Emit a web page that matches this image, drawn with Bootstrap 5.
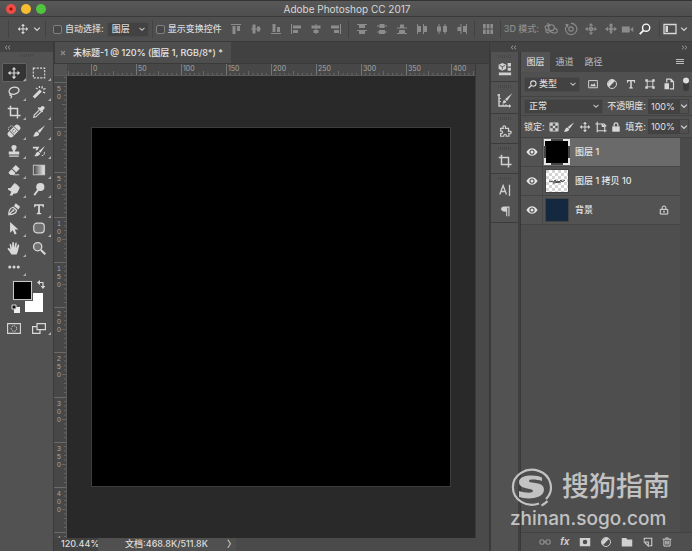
<!DOCTYPE html>
<html lang="zh-CN">
<head>
<meta charset="utf-8">
<meta name="viewport" content="width=device-width, initial-scale=1">
<title>Adobe Photoshop CC 2017</title>
<link href="https://cdn.jsdelivr.net/npm/bootstrap@5.3.0/dist/css/bootstrap.min.css" rel="stylesheet">
<style>
:root{--panel:#525252;--bar:#4f4f4f;--dark:#434343;--line:#3a3a3a;--ink:#d8d8d8}
body{font-family:Inter,"Noto Sans CJK SC",sans-serif;font-size:9px;line-height:12px;color:var(--ink);background:var(--panel)}
button{background:none;border:0;padding:0;color:inherit;line-height:12px}
svg{display:block;fill:currentColor}
.ln{fill:none;stroke:currentColor}
.i10{width:10px;height:10px}.i12{width:12px;height:12px}.i14{width:14px;height:14px}.i16{width:16px;height:16px}
.fit{min-width:0;min-height:0}
.titlebar{height:17px;background:linear-gradient(#585858,#4e4e4e);border-bottom:1px solid var(--line);font-size:10px;border-top:1px solid #333;padding-left:2px}
.lights{left:6px;top:3px;gap:5px}
.light{width:10px;height:10px;border-radius:50%}
.l-red{background:radial-gradient(circle,#8c0f0c 0 1px,#ee4d45 2px)}
.l-yel{background:#f6bd30}.l-grn{background:#50c43e}
.options{height:25px;background:var(--bar);border-bottom:1px solid var(--line);white-space:nowrap;overflow:hidden;font-weight:500}
.options>*,.options .cellrow>*{flex-shrink:0}
.sep{width:1px;height:18px;background:#434343}
.gsep{margin:0 3px 0 2px}
.cell{width:20px;height:18px;display:flex;align-items:center;justify-content:center}
.off{color:#8c8c8c}
.tick{appearance:none;width:9px;height:9px;margin:0 3px;border:1px solid #808080;border-radius:2px;background:#474747}
.tick:checked{background:#bbb}
.pick{appearance:none;border:1px solid #4b4b4b;border-radius:1px;background-color:#424242;color:var(--ink);font-size:9px;line-height:12px;font-weight:500;padding:0 12px 0 4px;height:15px;
background-image:url("data:image/svg+xml,%3Csvg xmlns='http://www.w3.org/2000/svg' viewBox='0 0 8 8'%3E%3Cpath d='M1.5 2.8 4 5.2 6.5 2.8' fill='none' stroke='%23bbb' stroke-width='1.1'/%3E%3C/svg%3E");background-repeat:no-repeat;background-position:right 2px center;background-size:8px}
.pick.auto{width:42px;margin:0 3px}
.pick.kind{width:56px;padding-left:14px}
.kindico{left:4px;top:3px;width:9px;height:9px;z-index:1}
.strip{height:10px;background:var(--dark);color:#a5a5a5;padding:0 4px}
.strip svg{width:7px;height:5px}
.toolcol{width:54px;background:var(--panel);border-right:1px solid var(--line)}
.grip{width:13px;height:3px;margin:2px auto 6px;background:repeating-linear-gradient(90deg,#484848 0 1px,transparent 1px 2px)}
.toolgrid{display:grid;grid-template-columns:25px 25px;grid-auto-rows:1fr;height:214px;margin:0 3px 0 2px;color:#d8d8d8}
.toolgrid button,.modes button{display:flex;align-items:center;justify-content:center;position:relative;border-radius:1px}
.toolgrid button{padding-right:2px}
.more::after{content:"";position:absolute;right:1px;bottom:1px;border:solid transparent;border-width:0 0 3px 3px;border-bottom-color:#adadad}
.toolgrid .picked{background:#343434;outline:1px solid #626262;outline-offset:-1px}
.swatches{height:36px;margin-top:2px}
.swatches button{position:absolute}
.swatches .bg-sw{left:25px;top:14px;width:18px;height:19px;background:#fff}
.swatches .fg-sw{left:13px;top:2px;width:19px;height:19px;background:#000;border:1px solid #c8c8c8;outline:1px solid #555}
.swap{left:37px;top:1px}.deft{left:11px;top:25px}
.modes{margin:5px 2px 0;display:grid;grid-template-columns:25px 25px}
.modes button{height:16px;padding-right:2px}
.doc{border-right:1px solid var(--line)}
.doctabs{height:22px;background:#414141;border-bottom:1px solid var(--line)}
.doctab{background:#4e4e4e;border-left:1px solid #3a3a3a;padding:0 8px 0 5px;gap:7px;color:#e6e6e6;font-weight:500;white-space:nowrap}
.rulerrow{height:12px;background:#474747;border-bottom:1px solid #5a5a5a}
.corner{width:13px;background:#525252}
.ruler{color:#a6a6a6;font-size:7px;line-height:9px}
.rh{padding-left:24px;overflow:hidden;position:relative}
.rh span{width:45px;flex-shrink:0;padding-left:1px;border-left:1px solid #757575}
.tks{position:absolute;inset:0;width:100%;height:100%}
.tpat{stroke:#666;fill:none}
.rv{width:13px;background:#474747;border-right:1px solid #5a5a5a;position:relative;overflow:hidden;padding-top:6px;font-family:"Liberation Sans",sans-serif}
.rv span{display:block;height:45px;flex-shrink:0;padding:2px 0 0 3px;line-height:8px;border-top:1px solid #6a6a6a;width:12px}
.desk{background:#292929;padding:51px 24px}
.board{background:#000;border:1px solid #3d3d3d}
.scroller{width:14px;background:#4a4a4a;border-left:1px solid #3a3a3a}
.status{height:13px;background:#4a4a4a;color:#dcdcdc;font-weight:500}
.zoomval{width:44px;padding-left:7px;background:#434343}
.docinfo{width:138px;background:#505050;padding:0 0 0 27px}
.dock{width:202px;background:#404040}
.iconcol{width:28px;background:var(--panel);border-left:1px solid var(--line);color:#d0d0d0}
.iconcol .grp{border-bottom:1px solid #3b3b3b;padding-bottom:5px}
.iconcol .grip{width:14px;margin:3px auto 4px}
.iconcol button{display:block;margin:0 auto}
.iconcol .gap-below{margin-bottom:9px}
.panel{background:#4e4e4e;border-left:1px solid #393939;margin-left:2px}
.ptabs{height:20px;background:#424242;color:#bcbcbc;font-weight:500}
.ptabs button{width:29px}
.ptabs .on{background:#535353;color:#ececec}
.ptabs .pmenu{width:16px}
.prow{padding:0 3px;white-space:nowrap;font-weight:500;border-bottom:1px solid #434343;background:#505050}
.r1{height:25px}.r2{height:19px}.r3{height:22px}
.num{width:31px;height:15px;margin-left:2px;background:#434343;border:1px solid #414141;color:#e0e0e0;font-size:9px;padding:0 2px;border-radius:0}
.drop{width:10px;height:15px;border:1px solid #424242;display:flex;align-items:center;justify-content:center}
.drop svg,.chev{width:8px;height:8px}
.layers{border-right:12px solid #4a4a4a}
.layer{height:29px;border-bottom:1px solid #454545;background:#535353;font-weight:500;color:#e6e6e6}
.layer.on{background:#6a6a6a}
.eye{width:22px;height:28px;display:flex;align-items:center;justify-content:center;border-right:1px solid #484848;background:#535353}
.thumb{width:24px;height:24px;margin:0 6px 0 2px;border:1px solid #444}
.t1{background:#000;width:26px;height:26px;margin:0 5px 0 1px;border:0}
.t2{background:repeating-conic-gradient(#fff 0 25%,#d4d4d4 0 50%) 0 0/6px 6px;color:#444}
.t3{background:#14293f}
.lockmark{margin:0 11px 0 auto}
.pfoot{height:19px;background:#4f4f4f;border-top:1px solid #424242;padding:0 20px 0 18px;color:#d0d0d0}
.fxi{font:italic 700 10px/12px "Liberation Sans",sans-serif}
.wm{right:22px;bottom:22px;color:#c2c2c2;line-height:1}
.wm .logo{width:44px;height:42px}
.wm-a{font-size:27px;line-height:34px;padding-bottom:6px;font-family:"Noto Sans CJK SC",sans-serif;font-weight:500}
.wm-b{font:500 19px/20px Inter,sans-serif}
</style>
<script src="https://cdn.jsdelivr.net/npm/bootstrap@5.3.0/dist/js/bootstrap.bundle.min.js"></script>
</head>
<body class="vh-100 d-flex flex-column overflow-hidden">
<svg width="0" height="0" class="position-absolute" aria-hidden="true">
<defs>
<symbol id="move" viewBox="0 0 16 16"><path d="M8 1 10.600 4H8.700v3.300H12V5.400L15 8l-3 2.600V8.700H8.700V12h1.900L8 15l-2.600-3h1.900V8.700H4v1.900L1 8l3-2.600v1.900h3.300V4H5.400z"/></symbol>
<symbol id="marq" viewBox="0 0 16 16"><rect x="1.500" y="2.500" width="13" height="11" class="ln" stroke-width="1.300" stroke-dasharray="2.400 1.400"/></symbol>
<symbol id="lasso" viewBox="0 0 16 16"><path class="ln" stroke-width="1.400" d="M4.500 10.500C0 7.500 3.500 2.500 8.800 2.500S15.500 7.200 11 9.600C8.500 10.800 6 10.800 4.500 10.200c-1.700.3-1.500 2.300.2 2 1.300.6.600 2-.7 2.800"/></symbol>
<symbol id="wand" viewBox="0 0 16 16"><path d="m.8 13 8-8 2.500 2.500-8 8z"/><path class="ln" stroke-width="1.400" d="M8.500 1v2.500M12 1.500 11 4M15.500 4l-2.700 1M15 9l-2.500-.8M4.500 3.500l2 1"/></symbol>
<symbol id="crop" viewBox="0 0 16 16"><path class="ln" stroke-width="1.700" d="M4 .8V12h11.500M.8 4H12v11.500"/></symbol>
<symbol id="drop" viewBox="0 0 16 16"><path d="M10 2.500c1-1.500 2.500-2 3.700-.8s.8 2.800-.7 3.800l-1 1 .8.900-1.300 1.300-5-5 1.300-1.300.9.800z"/><path class="ln" stroke-width="1.300" d="m8.500 5.500-6 6L2 14l2.500-.5 6-6"/></symbol>
<symbol id="heal" viewBox="0 0 16 16"><g transform="rotate(-45 8 8)"><rect x="-.5" y="4.300" width="17" height="7.400" rx="3.300"/><path stroke="#525252" d="M4.500 4.500v7M11.500 4.500v7"/><path fill="#525252" d="M6 6h1.200v1.200H6zm2.500 0h1.200v1.200H8.500zM6 8.700h1.200v1.200H6zm2.500 0h1.200v1.200H8.500z"/></g><path class="ln" stroke-dasharray="1.500 1" d="M2 7C1 3.500 3.500 1.500 7 2.500"/></symbol>
<symbol id="brush" viewBox="0 0 16 16"><path d="M15 1.500 8.800 10.200 6.400 8zM5.700 8.600l2.500 2.200C8.300 13.500 5 15 1 14c2-.8 1.600-4.800 4.700-5.400z"/></symbol>
<symbol id="stamp" viewBox="0 0 16 16"><path d="M6.800 8.500C7 6.500 5 6 5 4a3 3 0 0 1 6 0c0 2-2 2.500-1.800 4.500H14V12H2V8.500zM2.500 13h11v1.500h-11z"/></symbol>
<symbol id="hist" viewBox="0 0 16 16"><path d="M15 2 9.800 10 7.600 8.200zM7 8.800 9.200 10.600c0 2.600-3.400 4-6.700 3 2-.8 1.500-4.200 4.500-4.800zM1 3h7.500L6 7H4l1.200-2H1z"/><path class="ln" d="M11 13.500c3-.5 3.500-2.500 3-4.500"/></symbol>
<symbol id="erase" viewBox="0 0 16 16"><path d="m6 6.200 4-4 4.500 4.500-4 4zM5.300 7l4.500 4.400-2.300 2.200H4L1.800 11.500v-1z"/><path class="ln" d="M7 13.500h7"/></symbol>
<linearGradient id="gg"><stop stop-color="#444"/><stop offset="1" stop-color="#eee"/></linearGradient>
<symbol id="grad" viewBox="0 0 16 16"><rect x="1.500" y="2.500" width="13" height="11" fill="url(#gg)" stroke="#ccc"/></symbol>
<symbol id="smudge" viewBox="0 0 16 16"><path d="M3 15.500 5 11 1 8.500C1 7 2.500 6.500 3.700 7.200L8 2c1-1 2.200-.2 2 .8.900-.5 2 0 1.800 1.200 1-.3 1.800.5 1.500 1.500.9 0 1.400.6 1 1.700L12 12c-1.500 1.400-3.500 1.200-5 1.500L6.500 15.500z"/></symbol>
<symbol id="dodge" viewBox="0 0 16 16"><circle cx="9.500" cy="5.700" r="4.700"/><path class="ln" stroke-width="2" d="m7 9-4.500 6"/></symbol>
<symbol id="pen" viewBox="0 0 16 16"><path class="ln" stroke-width="1.400" d="M2 14.500c0-4 .8-7.500 5-8.500l4 3.500c-.7 4-4.500 4.800-9 5zm0 0 4.500-4.500"/><circle cx="7.300" cy="9.500" r="1.300"/><path d="m8 4.500 2-3 5 4-2 3z"/></symbol>
<symbol id="type" viewBox="0 0 16 16"><path d="M1.500 1.500h13v4.300H13c-.1-1.600-.6-2.200-2.200-2.200H9.200v8.700c0 1 .4 1.200 1.800 1.200V15H5v-1.500c1.400 0 1.800-.2 1.800-1.200V3.600H5.200C3.600 3.600 3.100 4.200 3 5.800H1.500z"/></symbol>
<symbol id="arrow" viewBox="0 0 16 16"><path d="M3.500 1v12.500l3.100-3 2.100 5 2.300-1-2.100-4.700H13z"/></symbol>
<symbol id="rrect" viewBox="0 0 16 16"><rect x="2" y="2.500" width="12" height="11" rx="3.500" fill="#707070" stroke="currentColor" stroke-width="1.300"/></symbol>
<symbol id="hand" viewBox="0 0 16 16"><path d="M5 15.500C3.800 13 2 11 .8 9.500.5 8 2 7.700 3 8.700l1 1.100L3 4.200c0-1.200 1.400-1.300 1.700-.2l1 4L6 2c.2-1.300 1.700-1.300 1.900 0l.2 5.700L9.500 2.400c.4-1.200 1.800-.8 1.700.4l-.8 5.600 2-4c.6-1 1.800-.4 1.500.6-.8 3-1.200 7.500-3 10.500z"/></symbol>
<symbol id="loupe" viewBox="0 0 16 16"><circle cx="6.500" cy="6.500" r="4.700" fill="#727272" stroke="currentColor" stroke-width="1.500"/><path class="ln" stroke-width="2.300" d="m10.200 10.200 5 5"/></symbol>
<symbol id="dots" viewBox="0 0 16 16"><circle cx="2.300" cy="8" r="2"/><circle cx="8" cy="8" r="2"/><circle cx="13.700" cy="8" r="2"/></symbol>
<symbol id="find" viewBox="0 0 16 16"><circle class="ln" stroke-width="1.900" cx="9.500" cy="6.300" r="4.800"/><path class="ln" stroke-width="2.300" d="m6 9.800-5 5"/></symbol>
<symbol id="chev" viewBox="0 0 8 8"><path class="ln" stroke-width="1.200" d="M1.200 2.600 4 5.400l2.800-2.800"/></symbol>
<symbol id="dbl" viewBox="0 0 8 6"><path class="ln" stroke-width="1.100" d="M3.500.8 1.200 3l2.300 2.200M7 .8 4.700 3 7 5.200"/></symbol>
<symbol id="al-t" viewBox="0 0 12 12"><path d="M1 1h10v1H1zM2.500 3h3v8h-3zm4.500 0h3v5H7z"/></symbol>
<symbol id="al-m" viewBox="0 0 12 12"><path d="M1 5.500h10v1H1zM2.500 1.500h3v9h-3zm4.500 2h3v5H7z"/></symbol>
<symbol id="al-b" viewBox="0 0 12 12"><path d="M1 10h10v1H1zM2.500 1h3v8h-3zM7 4h3v5H7z"/></symbol>
<symbol id="ds-t" viewBox="0 0 12 12"><path d="M1 1h10v1H1zm2 1h6v3H3zM1 7h10v1H1zm2 1h6v3H3z"/></symbol>
<symbol id="ds-m" viewBox="0 0 12 12"><path d="M1 2.500h10v1H1zM3.500 1h5v4h-5zM1 8.500h10v1H1zM3 7h6v4H3z"/></symbol>
<symbol id="ds-b" viewBox="0 0 12 12"><path d="M1 4.500h10v1H1zm3-3h4v3H4zM1 10h10v1H1zm2-3h6v3H3z"/></symbol>
<symbol id="dist" viewBox="0 0 12 12"><path d="M1 1h2.700v4.600H1zm3.700 0h2.700v4.600H4.700zm3.700 0H11v4.600H8.400zM1 6.500h2.700V11H1zm3.700 0h2.700V11H4.700zm3.700 0H11V11H8.400z"/></symbol>
<symbol id="orbit" viewBox="0 0 16 16"><g class="ln" stroke-width="1.300"><path d="M5 3.500C1 3.500 0 6.500 3 8.500s7 4.500 10 4c3-.6 3-4-.5-5.500M6 12.500c-3 0-4.500-1.500-3.500-4"/><circle cx="8.500" cy="6.500" r="3.300"/><path d="m4 1.500 2.500 2L4 5.500"/></g></symbol>
<symbol id="roll" viewBox="0 0 16 16"><g class="ln" stroke-width="1.300"><circle cx="8" cy="8" r="2.500"/><path d="M4 3a6.500 6.500 0 1 0 4-1.500M1.500 2.500 4.500 3 4 6"/></g></symbol>
<symbol id="pan" viewBox="0 0 16 16"><path d="m8 0 3 3.500H5zM0 8l3.500-3v6zm16 0-3.500-3v6zM8 16l3-3.500H5z"/><path class="ln" stroke-width="1.300" d="M8 3v10M3 8h10M6 6h4v4H6z"/></symbol>
<symbol id="slide" viewBox="0 0 16 16"><path d="M6 1h4v4H6zM0 8l4-3v6zm16 0-4-3v6zM5.500 11h5L8 15z"/><circle cx="8" cy="8" r="2.600"/><path d="M3 7.300h10v1.400H3zM7.300 4h1.400v8H7.300z"/></symbol>
<symbol id="cam" viewBox="0 0 16 16"><path d="M1 5h9v7H1zm9.500 3.500L14 5.500v6z"/></symbol>
<symbol id="eye" viewBox="0 0 16 16"><path fill-rule="evenodd" d="M.5 8C3 4.200 5.500 3 8 3s5 1.200 7.500 5C13 11.800 10.500 13 8 13S3 11.800.5 8zM8 4.500a3.500 3.500 0 1 0 0 7 3.500 3.500 0 0 0 0-7z"/><circle cx="8" cy="8" r="2"/></symbol>
<symbol id="lock" viewBox="0 0 16 16"><path d="M2 7h12v8.500H2z"/><path class="ln" stroke-width="2" d="M5 7V4.500a3 3 0 0 1 6 0V7"/></symbol>
<symbol id="locko" viewBox="0 0 16 16"><path class="ln" stroke-width="1.500" d="M2 7h12v7.500H2zM5 7V4.500a3 3 0 0 1 6 0V7"/><path d="M7 9h2v3H7z"/></symbol>
<symbol id="half" viewBox="0 0 16 16"><circle class="ln" stroke-width="1.300" cx="8" cy="8" r="6"/><path d="M12.200 3.800A6 6 0 0 0 3.800 12.200z"/></symbol>
<symbol id="pic" viewBox="0 0 16 16"><path class="ln" stroke-width="1.500" d="M1 2.500h14v11.500H1z"/><path d="m3.500 11.500 2.500-4 2 2 2-3 2.500 5z"/></symbol>
<symbol id="xform" viewBox="0 0 16 16"><path class="ln" stroke-width="1.500" d="M3.500 3.500h9v9h-9z"/><path d="M.5.500h4v4h-4zm11 0h4v4h-4zM.5 11.500h4v4h-4zm11 0h4v4h-4z"/></symbol>
<symbol id="smart" viewBox="0 0 16 16"><path class="ln" stroke-width="1.500" d="M5 6V1.500h5.500L14 5v9.500H9"/><path d="M2 7h6v8H2zm8-6v4.500h4.500z"/></symbol>
<symbol id="checker" viewBox="0 0 16 16"><path class="ln" stroke-width="1.400" d="M1.500 1.500h13v13h-13z"/><path d="M2 2h4v4H2zm8 0h4v4h-4zM6 6h4v4H6zm-4 4h4v4H2zm8 0h4v4h-4z"/></symbol>
<symbol id="art" viewBox="0 0 16 16"><path class="ln" stroke-width="1.500" d="M3 1v14M.5 4H12l3 3M13 6v9M3 13h12.500"/><path d="M9 3v5h5z"/></symbol>
<symbol id="props" viewBox="0 0 16 16"><path d="m5 1 4.300 2v4.800L5 10 .7 7.800V3z"/><path fill="none" stroke="#525252" d="m2 4 3 1.400L8 4M5 5.400v3"/><path d="M11 1h3.800v4H11zm0 5.500h3.800V10H11zM1 12h14v3H1z"/></symbol>
<symbol id="bset" viewBox="0 0 16 16"><path class="ln" stroke-width="1.400" d="M2 2v12h12M.5 3H3"/><path class="ln" d="M2 6.500h1.800M2 9.500h1.800M6 14v-1.800M9 14v-1.800M12.500 15.500v-3"/><path d="M15.500 1 10 9 8 7.300zM7.300 8l2 1.600c-.5 1.900-2.600 2.200-4 1.700 1-.5.600-3 2-3.300z"/></symbol>
<symbol id="plug" viewBox="0 0 16 16"><path class="ln" stroke-width="1.400" d="M3 5h3C4.500 1 9.500 1 8.500 5H12v3.500c4-1.500 4 3.500.5 2.500V14h-3c.5-3-3-3-3 0H3v-3c3 .5 3-3.500 0-3z"/></symbol>
<symbol id="chara" viewBox="0 0 16 16"><path class="ln" stroke-width="1.700" d="m1 14 4.500-12L10 14M2.500 10h6M14 1v15"/></symbol>
<symbol id="para" viewBox="0 0 16 16"><path d="M14 2v13h-1.500V3.500H11V15H9.500V9C1 9.500 1 2 7 2z"/></symbol>
<symbol id="mask" viewBox="0 0 16 16"><path fill-rule="evenodd" d="M1 2.500h14v11H1zM8 5a3 3 0 1 0 0 6 3 3 0 0 0 0-6z"/></symbol>
<symbol id="folder" viewBox="0 0 16 16"><path d="M1 2.500h6l1.500 2H15V14H1z"/></symbol>
<symbol id="newl" viewBox="0 0 16 16"><path class="ln" stroke-width="1.700" d="M2 6V2h12v12h-4M2 8h6.500v6.500z"/></symbol>
<symbol id="trash" viewBox="0 0 16 16"><path class="ln" stroke-width="1.500" d="M1 3.500h14M6 3V1.500h4V3M3 4v10.500h10V4M6 6v6m2-6v6m2-6v6"/></symbol>
<symbol id="link" viewBox="0 0 16 16"><rect class="ln" stroke-width="1.500" x="1" y="5" width="6" height="6" rx="3"/><rect class="ln" stroke-width="1.500" x="9" y="5" width="6" height="6" rx="3"/><path class="ln" stroke-width="1.500" d="M5.500 8h5"/></symbol>
<pattern id="tx" width="45" height="11" patternUnits="userSpaceOnUse" x="24"><path class="tpat" d="M4.500 9v2m4.500-2v2m4.500-2v2m4.500-2v2m4.500-4v4m4.500-2v2m4.500-2v2m4.500-2v2m4.500-2v2"/></pattern>
<pattern id="ty" width="12" height="45" patternUnits="userSpaceOnUse" y="6"><path class="tpat" d="M10 4.500h2m-2 4.500h2m-2 4.500h2m-2 4.500h2m-4 4.500h4m-2 4.500h2m-2 4.500h2m-2 4.500h2m-2 4.500h2"/></pattern>
</defs></svg>

<header class="titlebar position-relative d-flex align-items-center justify-content-center flex-shrink-0">
  <div class="lights position-absolute d-flex">
    <button class="light l-red" aria-label="关闭"></button><button class="light l-yel" aria-label="最小化"></button><button class="light l-grn" aria-label="缩放"></button>
  </div>
  Adobe Photoshop CC 2017
</header>

<div class="options d-flex align-items-center flex-shrink-0">
  <div class="d-flex align-items-center"><span class="sep ms-2"></span><button class="cell ms-1" aria-label="移动工具"><svg class="i12"><use href="#move"/></svg></button><svg class="chev"><use href="#chev"/></svg></div>
  <span class="sep ms-1 me-1"></span>
  <input class="tick" type="checkbox" id="auto"><label for="auto">自动选择:</label>
  <select class="pick auto" aria-label="自动选择对象"><option>图层</option></select>
  <span class="sep"></span>
  <input class="tick" type="checkbox" id="xf"><label for="xf">显示变换控件</label>
  <div class="d-flex align-items-center off cellrow">
    <button class="cell ms-1" aria-label="顶对齐"><svg class="i12"><use href="#al-t"/></svg></button><button class="cell" aria-label="垂直居中"><svg class="i12"><use href="#al-m"/></svg></button><button class="cell" aria-label="底对齐"><svg class="i12"><use href="#al-b"/></svg></button>
    <button class="cell" aria-label="左对齐"><svg class="i12"><use href="#al-t" transform="matrix(0 1 1 0 0 0)"/></svg></button><button class="cell" aria-label="水平居中"><svg class="i12"><use href="#al-m" transform="matrix(0 1 1 0 0 0)"/></svg></button><button class="cell" aria-label="右对齐"><svg class="i12"><use href="#al-b" transform="matrix(0 1 1 0 0 0)"/></svg></button>
    <span class="sep gsep"></span>
    <button class="cell" aria-label="按顶分布"><svg class="i12"><use href="#ds-t"/></svg></button><button class="cell" aria-label="垂直居中分布"><svg class="i12"><use href="#ds-m"/></svg></button><button class="cell" aria-label="按底分布"><svg class="i12"><use href="#ds-b"/></svg></button>
    <button class="cell" aria-label="按左分布"><svg class="i12"><use href="#ds-t" transform="matrix(0 1 1 0 0 0)"/></svg></button><button class="cell" aria-label="水平居中分布"><svg class="i12"><use href="#ds-m" transform="matrix(0 1 1 0 0 0)"/></svg></button><button class="cell" aria-label="按右分布"><svg class="i12"><use href="#ds-b" transform="matrix(0 1 1 0 0 0)"/></svg></button>
    <span class="sep gsep"></span>
    <button class="cell" aria-label="自动对齐图层"><svg class="i12"><use href="#dist"/></svg></button>
    <span class="sep gsep"></span>
    <span>3D 模式:</span>
  </div>
  <div class="d-flex align-items-center ms-auto off cellrow">
    <button class="cell" aria-label="旋转 3D"><svg class="i14"><use href="#orbit"/></svg></button><button class="cell" aria-label="滚动 3D"><svg class="i14"><use href="#roll"/></svg></button><button class="cell" aria-label="拖动 3D"><svg class="i12"><use href="#pan"/></svg></button><button class="cell" aria-label="滑动 3D"><svg class="i12"><use href="#slide"/></svg></button><button aria-label="缩放 3D"><svg class="i14"><use href="#cam"/></svg></button>
  </div>
  <button class="cell text-light" aria-label="搜索"><svg class="i12"><use href="#find"/></svg></button>
  <span class="sep ms-1"></span>
  <button class="cell" aria-label="工作区"><svg class="i14" viewBox="0 0 14 14"><path class="ln" stroke-width="1.300" d="M1 2.500h12v9H1z"/><path d="M2.500 4H5v6H2.500z"/></svg></button>
  <svg class="chev me-1"><use href="#chev"/></svg>
</div>

<div class="d-flex flex-grow-1 fit">
  <aside class="toolcol flex-shrink-0">
    <div class="strip d-flex align-items-center"><svg><use href="#dbl"/></svg></div>
    <div class="grip"></div>
    <div class="toolgrid">
      <button class="more picked" aria-label="移动"><svg class="i14"><use href="#move"/></svg></button><button class="more" aria-label="选框"><svg class="i14"><use href="#marq"/></svg></button>
      <button class="more" aria-label="套索"><svg class="i14"><use href="#lasso"/></svg></button><button class="more" aria-label="魔棒"><svg class="i14"><use href="#wand"/></svg></button>
      <button class="more" aria-label="裁剪"><svg class="i14"><use href="#crop"/></svg></button><button class="more" aria-label="吸管"><svg class="i14"><use href="#drop"/></svg></button>
      <button class="more" aria-label="修复画笔"><svg class="i14"><use href="#heal"/></svg></button><button class="more" aria-label="画笔"><svg class="i14"><use href="#brush"/></svg></button>
      <button class="more" aria-label="仿制图章"><svg class="i14"><use href="#stamp"/></svg></button><button class="more" aria-label="历史记录画笔"><svg class="i14"><use href="#hist"/></svg></button>
      <button class="more" aria-label="橡皮擦"><svg class="i14"><use href="#erase"/></svg></button><button class="more" aria-label="渐变"><svg class="i14"><use href="#grad"/></svg></button>
      <button class="more" aria-label="涂抹"><svg class="i14"><use href="#smudge"/></svg></button><button class="more" aria-label="减淡"><svg class="i14"><use href="#dodge"/></svg></button>
      <button class="more" aria-label="钢笔"><svg class="i14"><use href="#pen"/></svg></button><button class="more" aria-label="文字"><svg class="i12"><use href="#type"/></svg></button>
      <button class="more" aria-label="路径选择"><svg class="i14"><use href="#arrow"/></svg></button><button class="more" aria-label="圆角矩形"><svg class="i14"><use href="#rrect"/></svg></button>
      <button class="more" aria-label="抓手"><svg class="i14"><use href="#hand"/></svg></button><button aria-label="缩放"><svg class="i14"><use href="#loupe"/></svg></button>
      <button class="more" aria-label="更多工具"><svg class="i12"><use href="#dots"/></svg></button>
    </div>
    <div class="swatches position-relative">
      <button class="bg-sw" aria-label="背景色"></button><button class="fg-sw" aria-label="前景色"></button>
      <button class="swap" aria-label="切换颜色"><svg width="8" height="9" viewBox="0 0 8 9"><path d="M0 2.500 3 0v5z"/><path d="m6 9-2.200-3h4.400z"/><path class="ln" stroke-width="1.200" d="M2 2.500h4V7"/></svg></button>
      <button class="deft" aria-label="默认颜色"><svg width="9" height="9" viewBox="0 0 9 9"><path fill="#eee" d="M3 3h6v6H3z"/><path fill="#111" stroke="#ddd" d="M1 1h4v4H1z"/></svg></button>
    </div>
    <div class="modes">
      <button aria-label="快速蒙版"><svg width="14" height="11" viewBox="0 0 14 11"><path class="ln" stroke-width="1.100" d="M.6.6h12.800v9.800H.6z"/><circle class="ln" cx="7" cy="5.500" r="2.800" stroke-dasharray="1.500 1"/></svg></button>
      <button class="more" aria-label="屏幕模式"><svg width="14" height="11" viewBox="0 0 14 11"><g fill="#525252" stroke="currentColor" stroke-width="1.200"><path d="M.6 3.600H8v6.800H.6z"/><path d="M5 .6h8.400v6H5z"/></g></svg></button>
    </div>
  </aside>

  <main class="doc flex-grow-1 d-flex flex-column fit">
    <div class="doctabs d-flex flex-shrink-0">
      <div class="doctab d-flex align-items-center"><button class="off" aria-label="关闭文档"><svg width="6" height="6" viewBox="0 0 6 6"><path class="ln" stroke-width="1.100" d="m1 1 4 4m0-4L1 5"/></svg></button><span>未标题-1 @ 120% (图层 1, RGB/8*) *</span></div>
    </div>
    <div class="d-flex flex-grow-1 fit">
      <div class="flex-grow-1 d-flex flex-column fit">
        <div class="rulerrow ruler d-flex flex-shrink-0">
          <div class="corner flex-shrink-0"></div>
          <div class="rh d-flex flex-grow-1"><svg class="tks"><rect width="100%" height="11" fill="url(#tx)"/></svg><span>0</span><span>50</span><span>100</span><span>150</span><span>200</span><span>250</span><span>300</span><span>350</span><span>400</span></div>
        </div>
        <div class="d-flex flex-grow-1 fit">
          <div class="rv ruler d-flex flex-column flex-shrink-0"><svg class="tks"><rect width="12" height="100%" fill="url(#ty)"/></svg><span>5<br>0</span><span>0</span><span>5<br>0</span><span>1<br>0<br>0</span><span>1<br>5<br>0</span><span>2<br>0<br>0</span><span>2<br>5<br>0</span><span>3<br>0<br>0</span><span>3<br>5<br>0</span><span>4<br>0<br>0</span><span>4</span></div>
          <div class="desk flex-grow-1 d-flex"><div class="board flex-grow-1"></div></div>
        </div>
      </div>
      <div class="scroller flex-shrink-0"></div>
    </div>
    <div class="status d-flex align-items-stretch flex-shrink-0"><div class="zoomval">120.44%</div><div class="docinfo d-flex justify-content-between"><span class="text-nowrap">文档:468.8K/511.8K</span><span>〉</span></div></div>
  </main>

  <aside class="dock position-relative flex-shrink-0 d-flex flex-column">
    <div class="strip d-flex align-items-center justify-content-between flex-shrink-0"><svg class="ms-3"><use href="#dbl"/></svg><svg viewBox="0 0 8 6"><path class="ln" stroke-width="1.100" d="M1 .8 3.300 3 1 5.200M4.500.8 6.800 3 4.500 5.200"/></svg></div>
    <div class="d-flex flex-grow-1">
      <div class="iconcol flex-shrink-0">
        <div class="grp"><div class="grip"></div><button aria-label="属性"><svg class="i14"><use href="#props"/></svg></button></div>
        <div class="grp"><div class="grip"></div><button aria-label="画笔设置"><svg class="i16"><use href="#bset"/></svg></button></div>
        <div class="grp"><div class="grip"></div><button aria-label="扩展"><svg class="i14"><use href="#plug"/></svg></button></div>
        <div class="grp"><div class="grip"></div><button aria-label="裁剪预设"><svg class="i14"><use href="#crop"/></svg></button></div>
        <div class="grp"><div class="grip"></div><button class="gap-below" aria-label="字符"><svg class="i12"><use href="#chara"/></svg></button><button aria-label="段落"><svg class="i12"><use href="#para"/></svg></button></div>
      </div>
      <section class="panel flex-grow-1 d-flex flex-column fit">
        <div class="ptabs d-flex flex-shrink-0"><button class="on">图层</button><button>通道</button><button>路径</button><button class="pmenu ms-auto" aria-label="面板菜单"><svg width="8" height="6" viewBox="0 0 8 6"><path d="M0 0h8v1H0zm0 2h8v1H0zm0 2h8v1H0z"/></svg></button></div>
        <div class="prow r1 d-flex align-items-center justify-content-between">
          <div class="position-relative"><svg class="kindico position-absolute"><use href="#find"/></svg><select class="pick kind" aria-label="滤镜类型"><option>类型</option></select></div>
          <button aria-label="像素"><svg class="i10"><use href="#pic"/></svg></button><button aria-label="调整"><svg class="i12"><use href="#half"/></svg></button><button aria-label="文字图层"><svg class="i10"><use href="#type"/></svg></button><button aria-label="形状"><svg class="i10"><use href="#xform"/></svg></button><button aria-label="智能对象"><svg class="i12"><use href="#smart"/></svg></button><button aria-label="过滤开关"><svg width="6" height="14" viewBox="0 0 6 14"><rect width="6" height="14" rx="3" fill="#3b3b3b"/><circle cx="3" cy="3.500" r="3" fill="#ddd"/></svg></button>
        </div>
        <div class="prow r2 d-flex align-items-center">
          <select class="pick flex-grow-1" aria-label="混合模式"><option>正常</option></select>
          <label for="op" class="ms-1">不透明度:</label><input id="op" class="num" value="100%"><button class="drop" aria-label="不透明度滑块"><svg><use href="#chev"/></svg></button>
        </div>
        <div class="prow r3 d-flex align-items-center justify-content-between">
          <span>锁定:</span><button aria-label="锁定透明像素"><svg class="i10"><use href="#checker"/></svg></button><button aria-label="锁定图像像素"><svg class="i12"><use href="#brush"/></svg></button><button aria-label="锁定位置"><svg class="i12"><use href="#move"/></svg></button><button aria-label="防止嵌套"><svg class="i12"><use href="#art"/></svg></button><button aria-label="锁定全部"><svg class="i10"><use href="#lock"/></svg></button>
          <div class="d-flex align-items-center"><label for="fi">填充:</label><input id="fi" class="num" value="100%"><button class="drop" aria-label="填充滑块"><svg><use href="#chev"/></svg></button></div>
        </div>
        <div class="layers flex-grow-1">
          <div class="layer on d-flex align-items-center"><button class="eye" aria-label="可见"><svg class="i12"><use href="#eye"/></svg></button><svg class="thumb t1" viewBox="0 0 26 26"><path class="ln" stroke-width="2" d="M0 7V1h7m12 0h6v6m0 12v6h-6M7 25H1v-6"/><path fill="none" stroke="#888" d="M1 7v12M25 7v12M7 1h12M7 25h12"/></svg>图层 1</div>
          <div class="layer d-flex align-items-center"><button class="eye" aria-label="可见"><svg class="i12"><use href="#eye"/></svg></button><svg class="thumb t2" viewBox="0 0 22 22"><path class="ln" d="m3 11 2 1 1-1 2 1 1-2 1 2 2-1 1 1 2-2 1 2 3-2M7 13l8-1"/></svg>图层 1 拷贝 10</div>
          <div class="layer d-flex align-items-center"><button class="eye" aria-label="可见"><svg class="i12"><use href="#eye"/></svg></button><span class="thumb t3"></span>背景<svg class="i10 lockmark"><use href="#locko"/></svg></div>
        </div>
        <div class="pfoot d-flex align-items-center justify-content-between flex-shrink-0"><button class="off" aria-label="链接图层"><svg class="i12"><use href="#link"/></svg></button><button class="fxi" aria-label="图层样式">fx</button><button aria-label="添加蒙版"><svg class="i12"><use href="#mask"/></svg></button><button aria-label="调整图层"><svg class="i12"><use href="#half"/></svg></button><button aria-label="新建组"><svg class="i12"><use href="#folder"/></svg></button><button aria-label="新建图层"><svg class="i10"><use href="#newl"/></svg></button><button aria-label="删除"><svg class="i10"><use href="#trash"/></svg></button></div>
      </section>
    </div>
    <div class="wm position-absolute text-nowrap">
      <div class="d-flex align-items-center gap-2"><svg class="logo" viewBox="0 0 44 42"><path class="ln" stroke-width="2.200" d="M29 36.500A19 17.500 0 1 1 36 32M31.500 38.500q4-2 6-4.500"/><path d="M32 10.500C27 7.800 9 7 9 15c0 8 14 5.500 14 9 0 2.500-8 2-14 0v6c7 2.500 25 2.500 25-7.500C34 14 19 17 19 14c0-2.300 8-1.500 13 0z"/></svg><span class="wm-a">搜狗指南</span></div>
      <div class="wm-b">zhinan.sogo.com</div>
    </div>
  </aside>
</div>
</body>
</html>
